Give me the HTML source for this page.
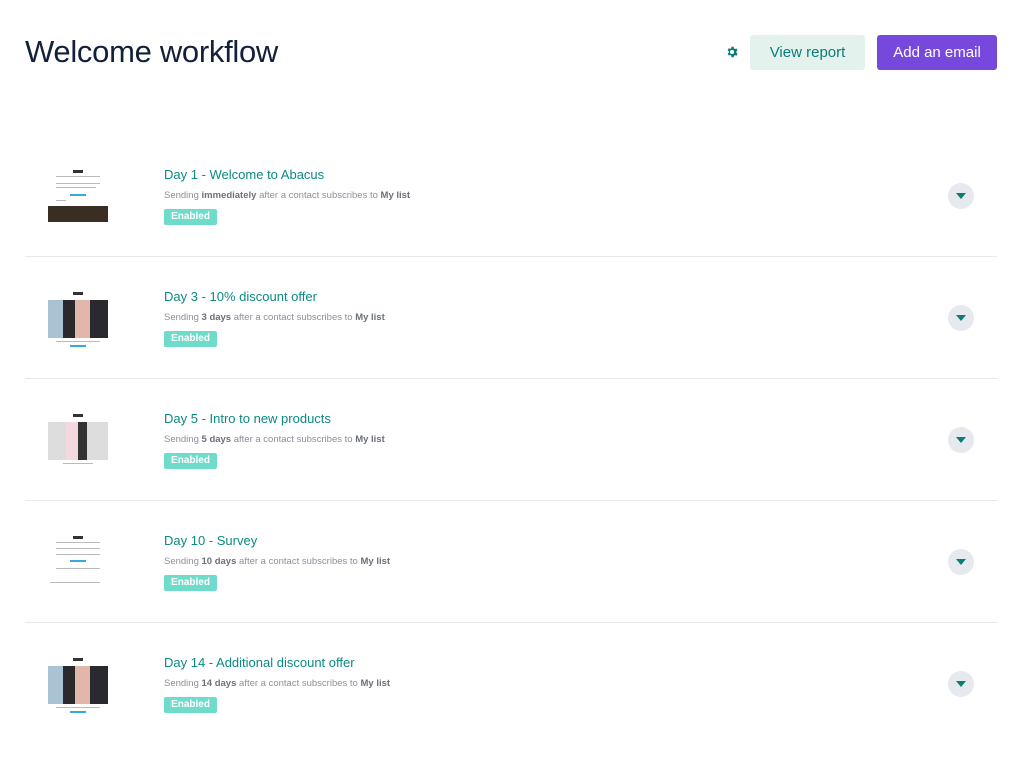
<!DOCTYPE html>
<html><head><meta charset="utf-8"><style>
*{margin:0;padding:0;box-sizing:border-box}
body{width:1024px;height:768px;background:#fff;font-family:"Liberation Sans",sans-serif;position:relative;overflow:hidden}
h1{position:absolute;left:25px;top:34px;font-size:31px;font-weight:400;color:#12203a;letter-spacing:-0.3px}
.gear{position:absolute;left:725px;top:45px}
.vr{position:absolute;left:750px;top:35px;width:115px;height:35px;background:#e4f2ee;border-radius:3px;color:#0a7d76;font-size:15px;text-align:center;line-height:35px}
.ae{position:absolute;left:877px;top:35px;width:120px;height:35px;background:#7649dc;border-radius:3px;color:#fff;font-size:15px;text-align:center;line-height:35px}
.row{position:absolute;left:25px;width:972px;height:122px}
.row.b{border-bottom:1px solid #e6e8eb}
.th{position:absolute;left:23px;top:33px;width:60px;height:58px;background:#fff}
.title{position:absolute;left:139px;top:32px;font-size:13px;color:#0a8a80}
.sub{position:absolute;left:139px;top:55px;font-size:9.5px;color:#8a8f99}
.sub b{color:#6b707a}
.badge{position:absolute;left:139px;top:74px;width:53px;height:16px;background:#6fdccb;border-radius:2px;color:#fff;font-size:10px;font-weight:bold;text-align:center;line-height:16px}
.dd{position:absolute;left:923px;top:48px;width:26px;height:26px;border-radius:50%;background:#e6e9ee}
.dd:after{content:"";position:absolute;left:8px;top:10px;border-left:5px solid transparent;border-right:5px solid transparent;border-top:6px solid #0a7d76}
.photo{position:absolute;left:0;top:10px;width:60px;height:38px;background:linear-gradient(90deg,#a9c3d4 0 25%,#2a2a2e 25% 45%,#e2b5ad 45% 70%,#2a2a2e 70%)}
.logo{position:absolute;left:25px;top:2px;width:10px;height:3px;background:#333}
.ln{position:absolute;left:8px;height:1px;background:#bbb}
.btn{position:absolute;left:22px;width:16px;height:2px;background:#3ba6e0}
</style></head><body>
<h1>Welcome workflow</h1>
<svg class="gear" width="14" height="14" viewBox="0 0 24 24"><path fill="#0a7d76" d="M19.4 13a7.5 7.5 0 0 0 0-2l2.1-1.6-2-3.5-2.5 1a7 7 0 0 0-1.7-1L15 3h-4l-.4 2.6a7 7 0 0 0-1.7 1l-2.5-1-2 3.5L6.6 11a7.5 7.5 0 0 0 0 2l-2.1 1.6 2 3.5 2.5-1a7 7 0 0 0 1.7 1L11 21h4l.4-2.6a7 7 0 0 0 1.7-1l2.5 1 2-3.5zM12 15.5a3.5 3.5 0 1 1 0-7 3.5 3.5 0 0 1 0 7z"/></svg>
<div class="vr">View report</div>
<div class="ae">Add an email</div>

<div class="row b" style="top:135px">
 <div class="th"><div class="logo"></div><div class="ln" style="top:8px;width:44px"></div><div class="ln" style="top:15px;width:44px"></div><div class="ln" style="top:19px;width:40px"></div><div class="btn" style="top:26px"></div><div class="ln" style="top:32px;width:10px"></div><div style="position:absolute;left:0;top:38px;width:60px;height:16px;background:#3a2e22"></div></div>
 <div class="title">Day 1 - Welcome to Abacus</div>
 <div class="sub">Sending <b>immediately</b> after a contact subscribes to <b>My list</b></div>
 <div class="badge">Enabled</div><div class="dd"></div>
</div>
<div class="row b" style="top:257px">
 <div class="th"><div class="logo"></div><div class="photo"></div><div class="ln" style="top:51px;width:44px"></div><div class="btn" style="top:55px"></div></div>
 <div class="title">Day 3 - 10% discount offer</div>
 <div class="sub">Sending <b>3 days</b> after a contact subscribes to <b>My list</b></div>
 <div class="badge">Enabled</div><div class="dd"></div>
</div>
<div class="row b" style="top:379px">
 <div class="th"><div class="logo"></div><div class="photo" style="background:linear-gradient(90deg,#ddd 0 30%,#f3d9df 30% 50%,#333 50% 65%,#ddd 65%)"></div><div class="ln" style="top:51px;width:30px;left:15px"></div></div>
 <div class="title">Day 5 - Intro to new products</div>
 <div class="sub">Sending <b>5 days</b> after a contact subscribes to <b>My list</b></div>
 <div class="badge">Enabled</div><div class="dd"></div>
</div>
<div class="row b" style="top:501px">
 <div class="th"><div class="logo"></div><div class="ln" style="top:8px;width:44px"></div><div class="ln" style="top:14px;width:44px"></div><div class="ln" style="top:20px;width:44px"></div><div class="btn" style="top:26px"></div><div class="ln" style="top:34px;width:44px"></div><div class="ln" style="top:48px;width:50px;left:2px"></div></div>
 <div class="title">Day 10 - Survey</div>
 <div class="sub">Sending <b>10 days</b> after a contact subscribes to <b>My list</b></div>
 <div class="badge">Enabled</div><div class="dd"></div>
</div>
<div class="row" style="top:623px">
 <div class="th"><div class="logo"></div><div class="photo"></div><div class="ln" style="top:51px;width:44px"></div><div class="btn" style="top:55px"></div></div>
 <div class="title">Day 14 - Additional discount offer</div>
 <div class="sub">Sending <b>14 days</b> after a contact subscribes to <b>My list</b></div>
 <div class="badge">Enabled</div><div class="dd"></div>
</div>
</body></html>
